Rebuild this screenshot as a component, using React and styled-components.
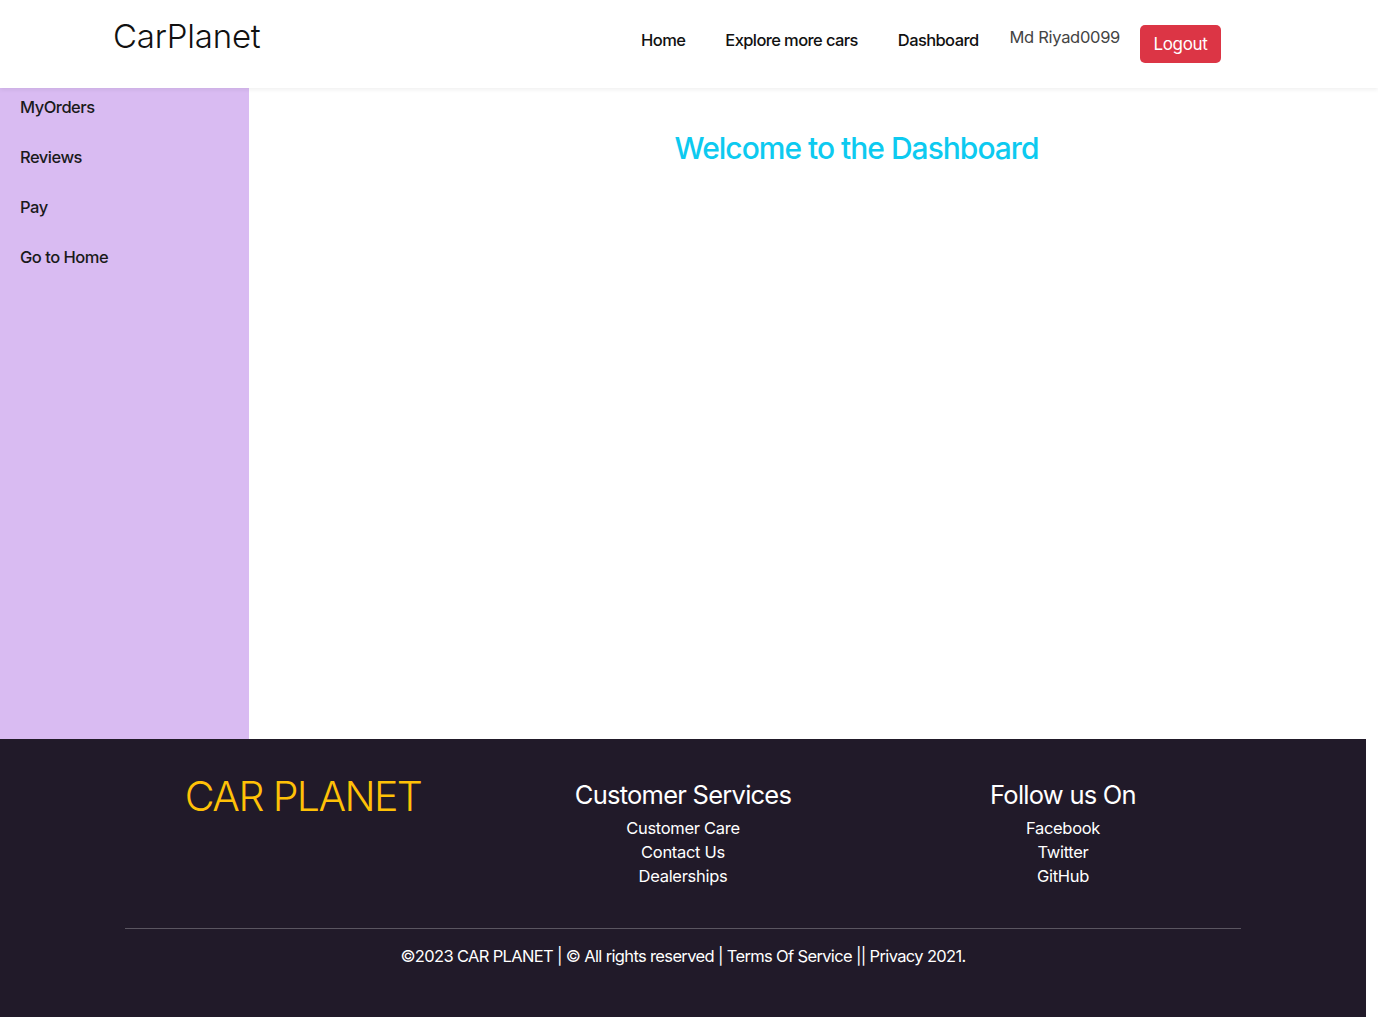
import React from "react";
import styled, { createGlobalStyle } from "styled-components";

const Global = createGlobalStyle`
  * { box-sizing: border-box; }
  html, body { margin: 0; padding: 0; background: #fff; }
  body { font-family: "Inter", "Noto Sans", sans-serif; color: #212529; }
  a { text-decoration: none; color: inherit; }
`;

const Page = styled.div`
  width: 1366px;
  display: flex;
  flex-direction: column;
`;

const Header = styled.header`
  width: 1378px;
  height: 88px;
  background: #fff;
  box-shadow: 0 2px 4px rgba(0, 0, 0, 0.06);
  position: relative;
  z-index: 1;
`;

const HeaderInner = styled.div`
  width: 1140px;
  margin-left: 113px;
  height: 100%;
  display: flex;
  align-items: center;
  justify-content: space-between;
`;

const Brand = styled.div`
  font-size: 33px;
  font-weight: 300;
  color: #111;
  letter-spacing: -0.2px;
  margin-top: -17px;
`;

const Nav = styled.nav`
  display: flex;
  align-items: center;
  margin-right: 32px;
`;

const NavLink = styled.a`
  font-size: 16.5px;
  font-weight: 500;
  color: #111;
  letter-spacing: -0.6px;
  margin-left: ${(p) => p.$gap ?? 40}px;
  margin-top: -8px;
`;

const UserName = styled.span`
  font-size: 16.5px;
  font-weight: 400;
  color: #444;
  letter-spacing: -0.3px;
  margin-left: 31px;
  margin-top: -14px;
`;

const LogoutBtn = styled.button`
  margin-left: 20px;
  margin-top: 0;
  width: 81px;
  height: 38px;
  border: none;
  border-radius: 5px;
  background: #dc3545;
  color: #fff;
  font-family: inherit;
  font-size: 17px;
  font-weight: 400;
  letter-spacing: -0.3px;
  padding: 0;
`;

const Body = styled.div`
  display: flex;
  height: 651px;
`;

const Sidebar = styled.aside`
  width: 249px;
  background: #d9bbf2;
  display: flex;
  flex-direction: column;
  padding: 6px 20px 0;
`;

const SideLink = styled.a`
  height: 50px;
  line-height: 26px;
  font-size: 16.5px;
  font-weight: 500;
  color: #1a1a1a;
  letter-spacing: -0.5px;
`;

const Main = styled.main`
  flex: 1;
  display: flex;
  justify-content: center;
  align-items: flex-start;
  padding: 40px 0 0 98px;
`;

const Welcome = styled.h2`
  margin: 0;
  line-height: 40px;
  font-size: 30px;
  font-weight: 500;
  letter-spacing: -1px;
  color: #0dcaf0;
`;

const Footer = styled.footer`
  background: #211a29;
  color: #fff;
  height: 290px;
`;

const FooterInner = styled.div`
  width: 1140px;
  margin: 0 auto;
  padding-top: 32px;
`;

const Cols = styled.div`
  display: grid;
  grid-template-columns: repeat(3, 1fr);
  text-align: center;
  height: 157px;
`;

const Col = styled.div`
  display: flex;
  flex-direction: column;
  align-items: center;
`;

const FooterBrand = styled.div`
  font-size: 41px;
  font-weight: 300;
  color: #ffc107;
  letter-spacing: -1.6px;
  line-height: 50px;
`;

const ColTitle = styled.div`
  font-size: 25.5px;
  font-weight: 400;
  letter-spacing: -0.75px;
  line-height: 34px;
  margin-top: 7px;
  margin-bottom: 4px;
`;

const ColLink = styled.a`
  font-size: 16.5px;
  line-height: 24px;
  letter-spacing: -0.3px;
  color: #fff;
`;

const Rule = styled.hr`
  margin: 0 12px;
  border: 0;
  border-top: 1px solid #5a5560;
`;

const Copy = styled.p`
  margin: 17px 0 0;
  text-align: center;
  font-size: 16.5px;
  letter-spacing: -0.65px;
`;

export default function App() {
  return (
    <>
      <Global />
      <Page>
        <Header>
          <HeaderInner>
            <Brand>CarPlanet</Brand>
            <Nav>
              <NavLink $gap={0}>Home</NavLink>
              <NavLink>Explore more cars</NavLink>
              <NavLink>Dashboard</NavLink>
              <UserName>Md Riyad0099</UserName>
              <LogoutBtn>Logout</LogoutBtn>
            </Nav>
          </HeaderInner>
        </Header>
        <Body>
          <Sidebar>
            <SideLink>MyOrders</SideLink>
            <SideLink>Reviews</SideLink>
            <SideLink>Pay</SideLink>
            <SideLink>Go to Home</SideLink>
          </Sidebar>
          <Main>
            <Welcome>Welcome to the Dashboard</Welcome>
          </Main>
        </Body>
        <Footer>
          <FooterInner>
            <Cols>
              <Col>
                <FooterBrand>CAR PLANET</FooterBrand>
              </Col>
              <Col>
                <ColTitle>Customer Services</ColTitle>
                <ColLink>Customer Care</ColLink>
                <ColLink>Contact Us</ColLink>
                <ColLink>Dealerships</ColLink>
              </Col>
              <Col>
                <ColTitle>Follow us On</ColTitle>
                <ColLink>Facebook</ColLink>
                <ColLink>Twitter</ColLink>
                <ColLink>GitHub</ColLink>
              </Col>
            </Cols>
            <Rule />
            <Copy>©2023 CAR PLANET | © All rights reserved | Terms Of Service || Privacy 2021.</Copy>
          </FooterInner>
        </Footer>
      </Page>
    </>
  );
}
